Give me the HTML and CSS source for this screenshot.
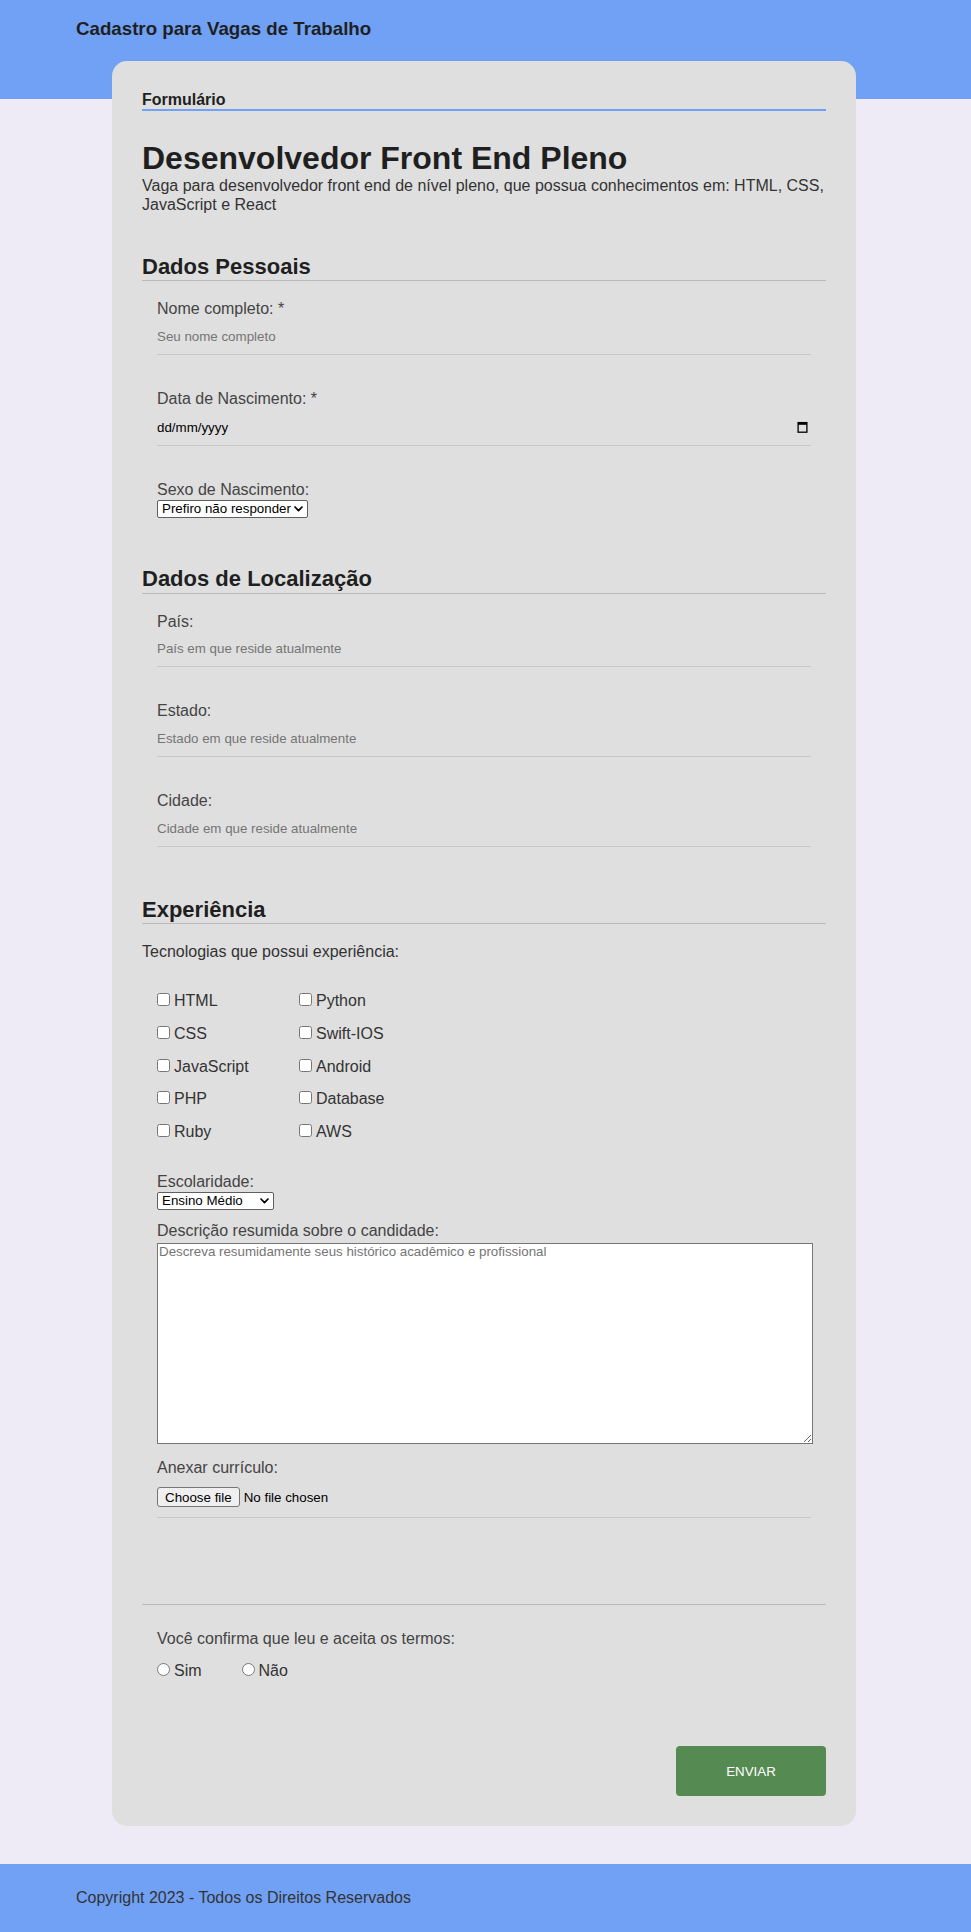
FILE: index.html
```html
<!DOCTYPE html>
<html lang="pt-BR">
<head>
<meta charset="utf-8">
<title>Cadastro para Vagas de Trabalho</title>
<link rel="stylesheet" href="styles.css">
</head>
<body>
<header class="site-header">
  <h3 class="site-title">Cadastro para Vagas de Trabalho</h3>
</header>

<main class="card">
  <form class="form" action="#">
    <h4 class="form-tag">Formulário</h4>
    <h1 class="job-title">Desenvolvedor Front End Pleno</h1>
    <p class="job-desc">Vaga para desenvolvedor front end de nível pleno, que possua conhecimentos em: HTML, CSS, JavaScript e React</p>

    <section class="section section-first">
      <h2 class="section-title">Dados Pessoais</h2>
      <div class="field">
        <label class="label" for="nome">Nome completo: *</label>
        <input class="input" id="nome" type="text" placeholder="Seu nome completo">
      </div>
      <div class="field">
        <label class="label" for="nascimento">Data de Nascimento: *</label>
        <div class="date-field">
          <input class="date-input" id="nascimento" type="text" placeholder="dd/mm/yyyy">
          <svg class="cal-icon" width="11" height="12" viewBox="0 0 11 12" aria-hidden="true"><rect x="1.1" y="1.6" width="8.8" height="9.6" fill="none" stroke="#000" stroke-width="1.3"/><rect x="1" y="1.2" width="9" height="2.6" fill="#000"/></svg>
        </div>
      </div>
      <div class="field">
        <label class="label" for="sexo">Sexo de Nascimento:</label>
        <span class="select-wrap select-wrap-gap">
          <select class="select" id="sexo">
            <option>Prefiro não responder</option>
            <option>Masculino</option>
            <option>Feminino</option>
          </select>
          <svg class="chev" width="9" height="6" viewBox="0 0 9 6" aria-hidden="true"><polyline points="1,1 4.5,4.6 8,1" fill="none" stroke="#000" stroke-width="1.7" stroke-linecap="round" stroke-linejoin="round"/></svg>
        </span>
      </div>
    </section>

    <section class="section section-location">
      <h2 class="section-title">Dados de Localização</h2>
      <div class="field">
        <label class="label" for="pais">País:</label>
        <input class="input" id="pais" type="text" placeholder="País em que reside atualmente">
      </div>
      <div class="field">
        <label class="label" for="estado">Estado:</label>
        <input class="input" id="estado" type="text" placeholder="Estado em que reside atualmente">
      </div>
      <div class="field">
        <label class="label" for="cidade">Cidade:</label>
        <input class="input" id="cidade" type="text" placeholder="Cidade em que reside atualmente">
      </div>
    </section>

    <section class="section">
      <h2 class="section-title">Experiência</h2>
      <p class="tech-intro">Tecnologias que possui experiência:</p>
      <div class="tech-grid">
        <div class="check"><input type="checkbox" id="t-html"><label for="t-html">HTML</label></div>
        <div class="check"><input type="checkbox" id="t-python"><label for="t-python">Python</label></div>
        <div class="check"><input type="checkbox" id="t-css"><label for="t-css">CSS</label></div>
        <div class="check"><input type="checkbox" id="t-swift"><label for="t-swift">Swift-IOS</label></div>
        <div class="check"><input type="checkbox" id="t-js"><label for="t-js">JavaScript</label></div>
        <div class="check"><input type="checkbox" id="t-android"><label for="t-android">Android</label></div>
        <div class="check"><input type="checkbox" id="t-php"><label for="t-php">PHP</label></div>
        <div class="check"><input type="checkbox" id="t-db"><label for="t-db">Database</label></div>
        <div class="check"><input type="checkbox" id="t-ruby"><label for="t-ruby">Ruby</label></div>
        <div class="check"><input type="checkbox" id="t-aws"><label for="t-aws">AWS</label></div>
      </div>

      <div class="field field-school">
        <label class="label" for="escolaridade">Escolaridade:</label>
        <span class="select-wrap">
          <select class="select" id="escolaridade">
            <option>Ensino Médio</option>
            <option>Ensino Técnico</option>
            <option>Ensino Superior</option>
            <option>Pós-graduação</option>
          </select>
          <svg class="chev" width="9" height="6" viewBox="0 0 9 6" aria-hidden="true"><polyline points="1,1 4.5,4.6 8,1" fill="none" stroke="#000" stroke-width="1.7" stroke-linecap="round" stroke-linejoin="round"/></svg>
        </span>
      </div>

      <div class="field field-desc">
        <label class="label" for="descricao">Descrição resumida sobre o candidade:</label>
        <textarea class="textarea" id="descricao" placeholder="Descreva resumidamente seus histórico acadêmico e profissional"></textarea>
      </div>

      <div class="field field-file">
        <label class="label" for="curriculo">Anexar currículo:</label>
        <div class="file-field">
          <input class="file-input" id="curriculo" type="file">
          <label class="file-btn" for="curriculo">Choose file</label>
          <span class="file-name">No file chosen</span>
        </div>
      </div>
    </section>

    <section class="terms">
      <p class="label terms-q">Você confirma que leu e aceita os termos:</p>
      <div class="radio-row">
        <span class="radio-opt"><input type="radio" name="termos" id="sim"><label for="sim">Sim</label></span>
        <span class="radio-opt"><input type="radio" name="termos" id="nao"><label for="nao">Não</label></span>
      </div>
    </section>

    <div class="actions">
      <button class="btn" type="submit">ENVIAR</button>
    </div>
  </form>
</main>

<footer class="site-footer">
  <p class="copyright">Copyright 2023 - Todos os Direitos Reservados</p>
</footer>
</body>
</html>
```

FILE: styles.css
```css
* {
  box-sizing: border-box;
}

html,
body {
  margin: 0;
}

body {
  background: #eeebf7;
  font-family: "Liberation Sans", Arial, sans-serif;
  font-size: 16px;
  line-height: 18.4px;
  color: #333;
}

/* Header */
.site-header {
  height: 99px;
  background: #70a1f5;
  padding: 18px 76px 0;
}

.site-title {
  margin: 0;
  font-size: 18.72px;
  line-height: 21.5px;
  font-weight: bold;
  color: #1f1f1f;
}

/* Card */
.card {
  width: 744px;
  margin: -38px auto 0 112px;
  background: #dfdfdf;
  border-radius: 15px;
  padding: 30px;
}

.form-tag {
  margin: 0;
  font-size: 16px;
  line-height: 18.4px;
  font-weight: bold;
  color: #1f1f1f;
  border-bottom: 2px solid #70a1f5;
}

.job-title {
  margin: 29px 0 0;
  font-size: 32px;
  line-height: 36.8px;
  font-weight: bold;
  color: #1f1f1f;
}

.job-desc {
  margin: 0;
  color: #333;
}

/* Sections */
.section-title {
  margin: 50px 0 19px;
  padding-bottom: 1px;
  font-size: 22px;
  line-height: 25.3px;
  font-weight: bold;
  color: #1f1f1f;
  border-bottom: 1px solid #b9b9b9;
}

.section-first .section-title {
  margin-top: 40px;
}

.section-location .section-title {
  margin-top: 48.5px;
}

.field {
  padding: 0 15px;
}

.field + .field {
  margin-top: 35px;
}

.label {
  display: block;
  margin: 0;
  color: #444;
}

.input {
  display: block;
  width: 100%;
  height: 36.3px;
  margin: 0;
  padding: 10px 0;
  border: 0;
  border-bottom: 1px solid #c8c8c8;
  background: transparent;
  font: 13.333px/15.3px "Liberation Sans", Arial, sans-serif;
  color: #000;
  outline: none;
}

.input::placeholder {
  color: #757575;
}

/* Date */
.date-field {
  display: flex;
  align-items: center;
  height: 37.6px;
  padding: 11px 3px 10.3px 0;
  border-bottom: 1px solid #c8c8c8;
}

.date-input {
  flex: 1;
  min-width: 0;
  height: 15.3px;
  margin: 0;
  padding: 0;
  border: 0;
  background: transparent;
  font: 13.333px/15.3px "Liberation Sans", Arial, sans-serif;
  color: #000;
  outline: none;
}

.date-input::placeholder {
  color: #000;
}

.cal-icon {
  display: block;
  flex: none;
}

/* Select */
.select-wrap {
  position: relative;
  display: block;
  width: max-content;
}

.select-wrap-gap {
  margin-top: 0.5px;
}

.select {
  display: block;
  height: 18px;
  margin: 0;
  padding: 0 16px 0 4px;
  -webkit-appearance: none;
  appearance: none;
  background: #fff;
  border: 1px solid #5f5f5f;
  border-radius: 2px;
  font: 13.333px/16px "Liberation Sans", Arial, sans-serif;
  color: #000;
}

.chev {
  position: absolute;
  right: 5px;
  top: 6px;
  pointer-events: none;
}

/* Experience */
.tech-intro {
  margin: 0;
  color: #333;
}

.tech-grid {
  display: grid;
  grid-template-columns: 142px 142px;
  grid-auto-rows: 18.4px;
  row-gap: 14.6px;
  margin-top: 30px;
  padding: 0 15px;
  color: #333;
}

.check input {
  margin: 0 4px 0 0;
}

.field.field-school {
  margin-top: 31.6px;
}

.field.field-desc {
  margin-top: 12.3px;
}

.field.field-file {
  margin-top: 15.3px;
}

.textarea {
  display: block;
  width: calc(100% + 2px);
  height: 201px;
  margin: 2px 0 0;
  padding: 0 1px;
  border: 1px solid #767676;
  border-radius: 0;
  background: #fff;
  font: 13.333px/15.3px "Liberation Sans", Arial, sans-serif;
  color: #000;
}

.textarea::placeholder {
  color: #757575;
}

.file-field {
  display: flex;
  align-items: center;
  gap: 4px;
  height: 41px;
  padding: 10px 0;
  border-bottom: 1px solid #c8c8c8;
  font: 13.333px/15.3px "Liberation Sans", Arial, sans-serif;
  color: #000;
}

.file-input {
  display: none;
}

.file-btn {
  display: inline-flex;
  align-items: center;
  height: 20px;
  padding: 0 7px;
  border: 1px solid #767676;
  border-radius: 3px;
  background: #efefef;
  color: #000;
}

/* Terms */
.terms {
  margin-top: 86.2px;
  padding: 24.3px 15px 0;
  border-top: 1px solid #b9b9b9;
}

.radio-row {
  display: flex;
  gap: 40px;
  margin-top: 14px;
  color: #333;
}

.radio-opt input {
  margin: 0 4px 0 0;
}

/* Actions */
.actions {
  display: flex;
  justify-content: flex-end;
  margin-top: 65.6px;
}

.btn {
  width: 150px;
  height: 50px;
  border: 0;
  border-radius: 4px;
  background: #558b52;
  color: #fff;
  font: 13.333px/15.3px "Liberation Sans", Arial, sans-serif;
  cursor: pointer;
}

/* Footer */
.site-footer {
  margin-top: 38px;
  background: #70a1f5;
  padding: 25px 76px;
}

.copyright {
  margin: 0;
  color: #333;
}
```
